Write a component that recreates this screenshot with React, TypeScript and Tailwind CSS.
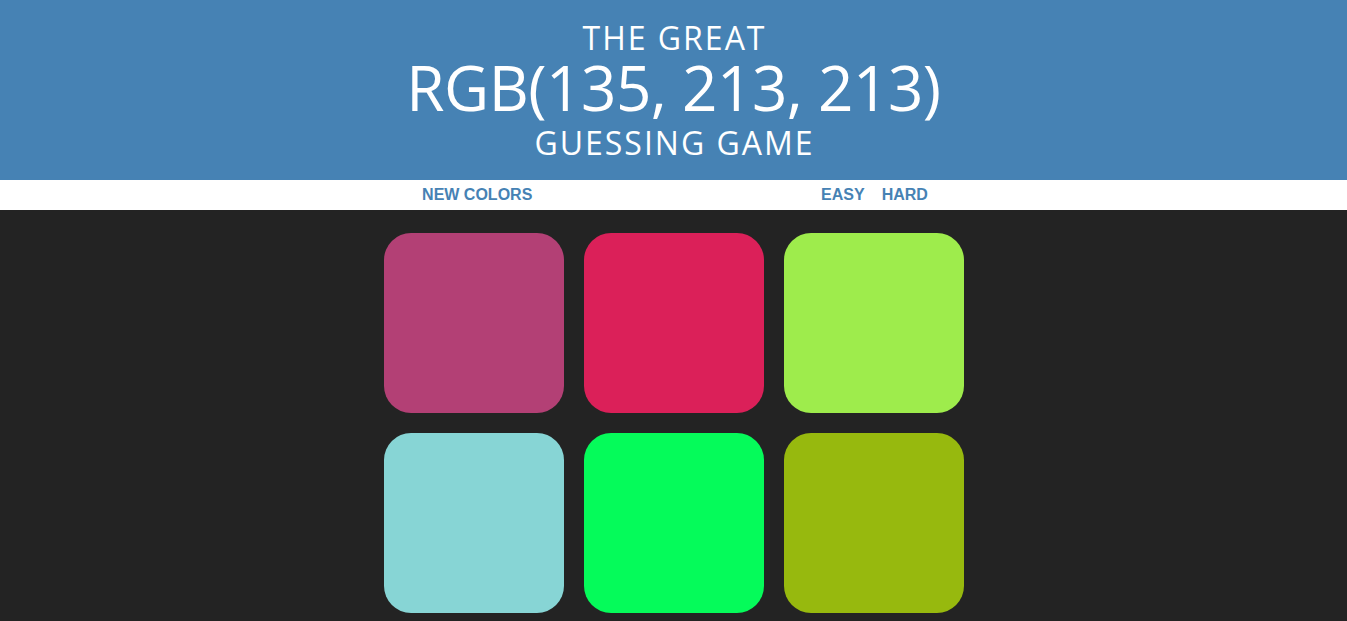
const colors = [
  "#b34075",
  "#db2059",
  "#9eec4c",
  "#87d5d5",
  "#05fb5a",
  "#97b90e",
];

const App = () => {
  return (
    <div className="min-h-screen bg-[#232323] font-['Open_Sans',sans-serif]">
      <h1 className="flex h-[180px] flex-col items-center justify-center bg-[#4682b4] text-center font-normal uppercase text-white">
        <span className="pl-[2px] text-[32px] leading-[36px] tracking-[2px]">The Great</span>
        <span className="mt-[1px] text-[62px] leading-[60px] tracking-[-0.5px]">RGB(135, 213, 213)</span>
        <span className="mt-[8px] pl-[2px] text-[32px] leading-[36px] tracking-[2px]">Guessing Game</span>
      </h1>

      <div className="flex h-[30px] items-center justify-center gap-1 bg-white pl-[3px] font-['Liberation_Sans',Arial,sans-serif] text-base font-bold uppercase text-[#4682b4]">
        <button className="h-full px-[6px] uppercase">New Colors</button>
        <span className="w-[20%]"></span>
        <button className="h-full px-[6px] uppercase">Easy</button>
        <button className="ml-[1px] h-full px-[6px] uppercase">Hard</button>
      </div>

      <div className="mx-auto grid w-[600px] grid-cols-3 gap-5 px-[10px] pt-[23px]">
        {colors.map((c) => (
          <div
            key={c}
            className="h-[180px] w-[180px] rounded-[15%]"
            style={{ backgroundColor: c }}
          />
        ))}
      </div>
    </div>
  );
};

export default App;
